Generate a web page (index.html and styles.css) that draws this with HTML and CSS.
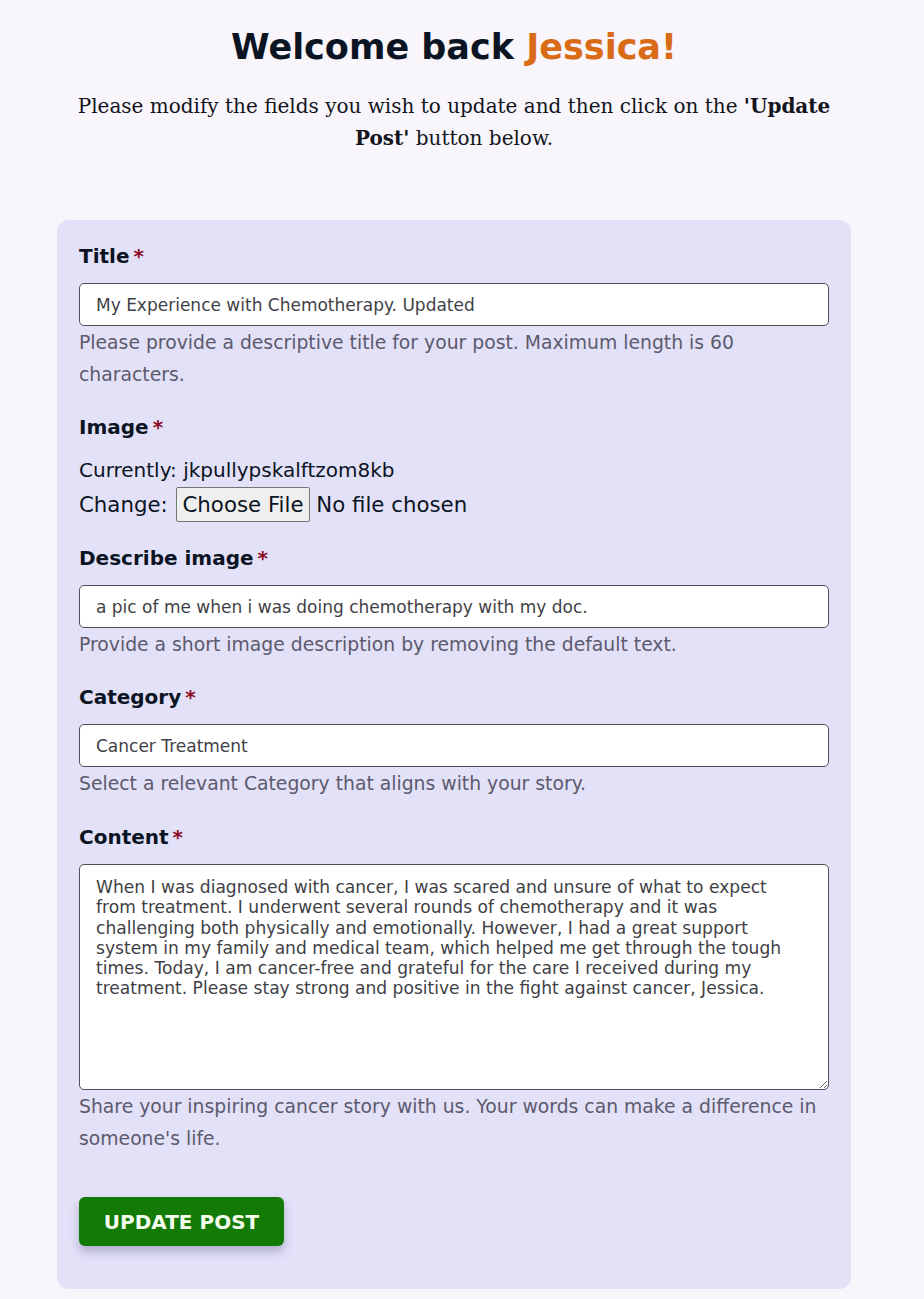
FILE: index.html
```html
<!DOCTYPE html>
<html lang="en">
<head>
<meta charset="utf-8">
<title>Update Post</title>
<link rel="stylesheet" href="styles.css">
</head>
<body>
<main class="page">
  <header class="intro">
    <h1 class="welcome">Welcome back <span class="name">Jessica!</span></h1>
    <p class="lead">Please modify the fields you wish to update and then click on the <strong>'Update</strong> <strong>Post'</strong> button below.</p>
  </header>
  <form class="card">
    <div class="field">
      <label class="label">Title<span class="req">*</span></label>
      <input class="input" type="text" value="My Experience with Chemotherapy. Updated">
      <p class="help">Please provide a descriptive title for your post. Maximum length is 60 characters.</p>
    </div>
    <div class="field">
      <label class="label">Image<span class="req">*</span></label>
      <div class="file-info">
        <div>Currently: jkpullypskalftzom8kb</div>
        <div class="change">Change: <span class="file-btn">Choose File</span> No file chosen</div>
      </div>
    </div>
    <div class="field">
      <label class="label">Describe image<span class="req">*</span></label>
      <input class="input" type="text" value="a pic of me when i was doing chemotherapy with my doc.">
      <p class="help">Provide a short image description by removing the default text.</p>
    </div>
    <div class="field">
      <label class="label">Category<span class="req">*</span></label>
      <input class="input" type="text" value="Cancer Treatment">
      <p class="help">Select a relevant Category that aligns with your story.</p>
    </div>
    <div class="field field-content">
      <label class="label">Content<span class="req">*</span></label>
      <textarea class="input textarea">When I was diagnosed with cancer, I was scared and unsure of what to expect from treatment. I underwent several rounds of chemotherapy and it was challenging both physically and emotionally. However, I had a great support system in my family and medical team, which helped me get through the tough times. Today, I am cancer-free and grateful for the care I received during my treatment. Please stay strong and positive in the fight against cancer, Jessica.</textarea>
      <p class="help">Share your inspiring cancer story with us. Your words can make a difference in someone's life.</p>
    </div>
    <button class="submit" type="button">UPDATE POST</button>
  </form>
</main>
</body>
</html>
```

FILE: styles.css
```css
* { box-sizing: border-box; }
html, body { margin: 0; padding: 0; }
body {
  background: #f8f5fb;
  font-family: "DejaVu Sans", "Open Sans", sans-serif;
  color: #0b1422;
  padding-right: 16px;
}
.page {
  width: 794px;
  margin: 0 auto;
  padding-top: 24px;
}
.intro { text-align: center; }
.welcome {
  margin: 0;
  font-size: 35px;
  line-height: 46px;
  font-weight: 700;
  color: #0b1422;
}
.name { color: #da6b16; }
.lead {
  margin: 20px auto 0;
  width: 780px;
  font-family: "DejaVu Serif", "Liberation Serif", serif;
  font-size: 20px;
  line-height: 32px;
  color: #14151c;
}
.lead strong { font-weight: 700; }
.card {
  margin-top: 66px;
  background: #e3e1f8;
  border-radius: 12px;
  padding: 20px 22px 43px;
  display: flex;
  flex-direction: column;
  align-items: flex-start;
}
.field {
  width: 100%;
  display: flex;
  flex-direction: column;
  margin-bottom: 20px;
}
.field-content { margin-top: 1px; }
.label {
  font-size: 20px;
  font-weight: 700;
  line-height: 32px;
  color: #0b1422;
  margin-bottom: 11px;
}
.req { color: #8c0b22; margin-left: 4px; }
.input {
  width: 100%;
  height: 43px;
  border: 1px solid #4e4e56;
  border-radius: 5px;
  background: #fff;
  padding: 0 16px;
  font-family: "DejaVu Sans", sans-serif;
  font-size: 17px;
  color: #3f3f46;
}
.textarea {
  height: 226px;
  padding: 12px 20px 10px 16px;
  font-size: 17.1px;
  line-height: 20.3px;
  resize: vertical;
}
.help {
  margin: 1px 0 0;
  font-size: 18.8px;
  line-height: 32px;
  color: #5c5a6d;
}
.file-info {
  font-size: 20px;
  line-height: 33px;
  color: #0b1422;
}
.change { font-size: 21.3px; }
.file-btn {
  display: inline-block;
  margin-left: 2px;
  padding: 0 5px;
  line-height: 33px;
  border: 1px solid #767676;
  background: #efefef;
  border-radius: 2px;
}
.submit {
  margin-top: 22px;
  background: #137a06;
  color: #f4fbec;
  border: none;
  border-radius: 6px;
  width: 205px;
  height: 49px;
  font-family: "DejaVu Sans", sans-serif;
  font-size: 20px;
  font-weight: 700;
  box-shadow: 0 6px 10px rgba(60, 60, 110, 0.3);
}
```
